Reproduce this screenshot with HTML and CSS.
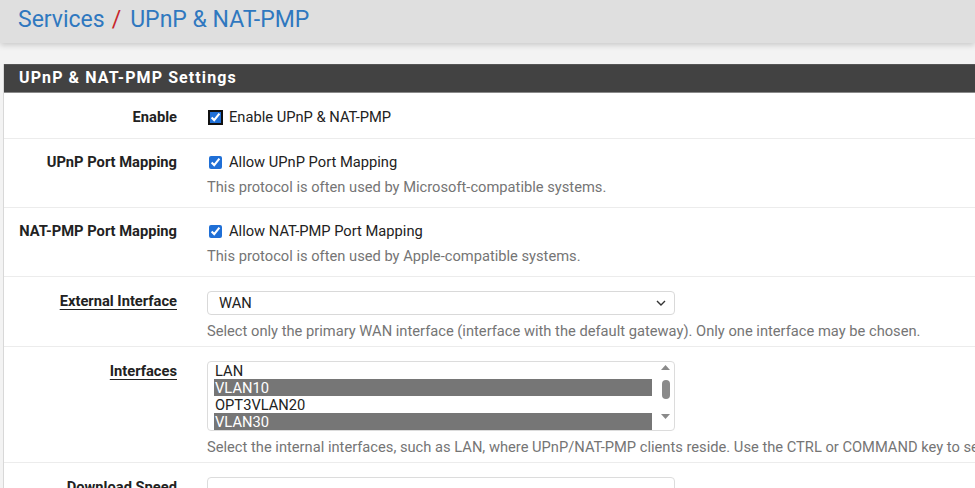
FILE: index.html
```html
<!DOCTYPE html>
<html lang="en">
<head>
<meta charset="utf-8">
<title>Services / UPnP &amp; NAT-PMP</title>
<link rel="stylesheet" href="styles.css">
</head>
<body>
<header class="crumbbar">
  <h1 class="crumbs"><a href="#">Services</a><span class="slash">/</span><a href="#">UPnP &amp; NAT-PMP</a></h1>
</header>
<main class="page">
  <section class="panel">
    <h2 class="panel-heading">UPnP &amp; NAT-PMP Settings</h2>
    <div class="panel-body">
      <div class="row first">
        <div class="label">Enable</div>
        <div class="field">
          <label class="check"><input type="checkbox" class="focused" checked> Enable UPnP &amp; NAT-PMP</label>
        </div>
      </div>
      <div class="row">
        <div class="label">UPnP Port Mapping</div>
        <div class="field">
          <label class="check"><input type="checkbox" checked> Allow UPnP Port Mapping</label>
          <p class="help">This protocol is often used by Microsoft-compatible systems.</p>
        </div>
      </div>
      <div class="row">
        <div class="label">NAT-PMP Port Mapping</div>
        <div class="field">
          <label class="check"><input type="checkbox" checked> Allow NAT-PMP Port Mapping</label>
          <p class="help">This protocol is often used by Apple-compatible systems.</p>
        </div>
      </div>
      <div class="row ctl">
        <div class="label"><span class="ul">External Interface</span></div>
        <div class="field">
          <div class="select">
            <span>WAN</span>
            <svg class="chev" width="10" height="6" viewBox="0 0 10 6"><path d="M1 1 L5 5 L9 1" fill="none" stroke="#333" stroke-width="1.4"/></svg>
          </div>
          <p class="help">Select only the primary WAN interface (interface with the default gateway). Only one interface may be chosen.</p>
        </div>
      </div>
      <div class="row ctl">
        <div class="label"><span class="ul">Interfaces</span></div>
        <div class="field">
          <div class="listbox">
            <div class="options">
              <div class="opt">LAN</div>
              <div class="opt sel">VLAN10</div>
              <div class="opt">OPT3VLAN20</div>
              <div class="opt sel">VLAN30</div>
            </div>
            <div class="scrollbar">
              <svg width="9" height="5" viewBox="0 0 9 5"><path d="M0 5 L4.5 0 L9 5 Z" fill="#8a8a8a"/></svg>
              <div class="thumb"></div>
              <svg class="down" width="9" height="5" viewBox="0 0 9 5"><path d="M0 0 L4.5 5 L9 0 Z" fill="#8a8a8a"/></svg>
            </div>
          </div>
          <p class="help">Select the internal interfaces, such as LAN, where UPnP/NAT-PMP clients reside. Use the CTRL or COMMAND key to se</p>
        </div>
      </div>
      <div class="row ctl">
        <div class="label">Download Speed</div>
        <div class="field">
          <div class="input"></div>
        </div>
      </div>
    </div>
  </section>
</main>
</body>
</html>
```
FILE: styles.css
```css
* { box-sizing: border-box; }
html, body { margin: 0; padding: 0; }
body {
  font-family: Roboto, "Noto Sans", "Liberation Sans", sans-serif;
  font-size: 14.7px;
  color: #212121;
  background: #f3f3f3;
  overflow: hidden;
}
.crumbbar {
  height: 43px;
  background: #dfdfdf;
  box-shadow: 0 2px 6px rgba(0,0,0,0.18);
  position: relative;
  z-index: 1;
}
.crumbs {
  margin: 0;
  padding: 0 0 0 18px;
  font-size: 23px;
  font-weight: 400;
  line-height: 39px;
}
.crumbs a { color: #2f78bf; text-decoration: none; }
.crumbs .slash { color: #c8262b; margin: 0 9px 0 7px; }
.page {
  padding: 21px 0 0 3px;
  background: #f3f3f3;
}
.panel {
  background: #fff;
  border-left: 1px solid #d8d8d8;
}
.panel-heading {
  margin: 0;
  height: 29px;
  background: #424242;
  border-top: 1px solid #555;
  border-bottom: 1px solid #8a8a8a;
  color: #fff;
  font-size: 16px;
  font-weight: 700;
  letter-spacing: 1.1px;
  line-height: 26px;
  padding-left: 15px;
}
.row {
  display: grid;
  grid-template-columns: 173px 1fr;
  column-gap: 30px;
  padding: 11px 0 10px;
  border-bottom: 1px solid #ececec;
}
.row.first { padding-top: 12px; padding-bottom: 9px; }
.row.ctl { padding: 14px 0 5px; }
.label {
  text-align: right;
  font-weight: 700;
  line-height: 24px;
  color: #222;
  white-space: nowrap;
}
.row.ctl .label { line-height: 20px; }
.label .ul { text-decoration: underline; text-underline-offset: 3px; }
.field { min-width: 0; }
.check {
  display: flex;
  align-items: center;
  height: 24px;
  gap: 7px;
  color: #222;
}
.check input {
  margin: 0 0 0 2px;
  width: 13px;
  height: 13px;
  accent-color: #1f6fd6;
}
.check input.focused {
  outline: 2px solid #111;
  outline-offset: -1px;
  border-radius: 3px;
}
.help {
  margin: 3px 0 0;
  line-height: 20px;
  color: #757575;
  white-space: nowrap;
}
.row.ctl .help { margin-top: 6px; }
.select {
  width: 468px;
  height: 24px;
  border: 1px solid #d9d9d9;
  border-radius: 4px;
  display: flex;
  align-items: center;
  justify-content: space-between;
  padding: 0 8px 0 11px;
  color: #222;
}
.chev { display: block; }
.listbox {
  width: 468px;
  height: 70px;
  border: 1px solid #dcdcdc;
  border-radius: 4px;
  display: flex;
  padding-left: 6px;
  overflow: hidden;
}
.options { width: 438px; }
.opt {
  height: 17px;
  line-height: 18px;
  padding-left: 1px;
  color: #222;
}
.opt.sel { background: #767676; color: #fff; }
.scrollbar {
  margin-left: 5px;
  width: 17px;
  display: flex;
  flex-direction: column;
  align-items: center;
  padding-top: 3px;
}
.thumb {
  margin-top: 10px;
  width: 8px;
  height: 19px;
  border-radius: 4px;
  background: #8a8a8a;
}
.scrollbar .down { margin-top: 15px; }
.input {
  width: 468px;
  height: 24px;
  border: 1px solid #dcdcdc;
  border-radius: 4px;
}
```
